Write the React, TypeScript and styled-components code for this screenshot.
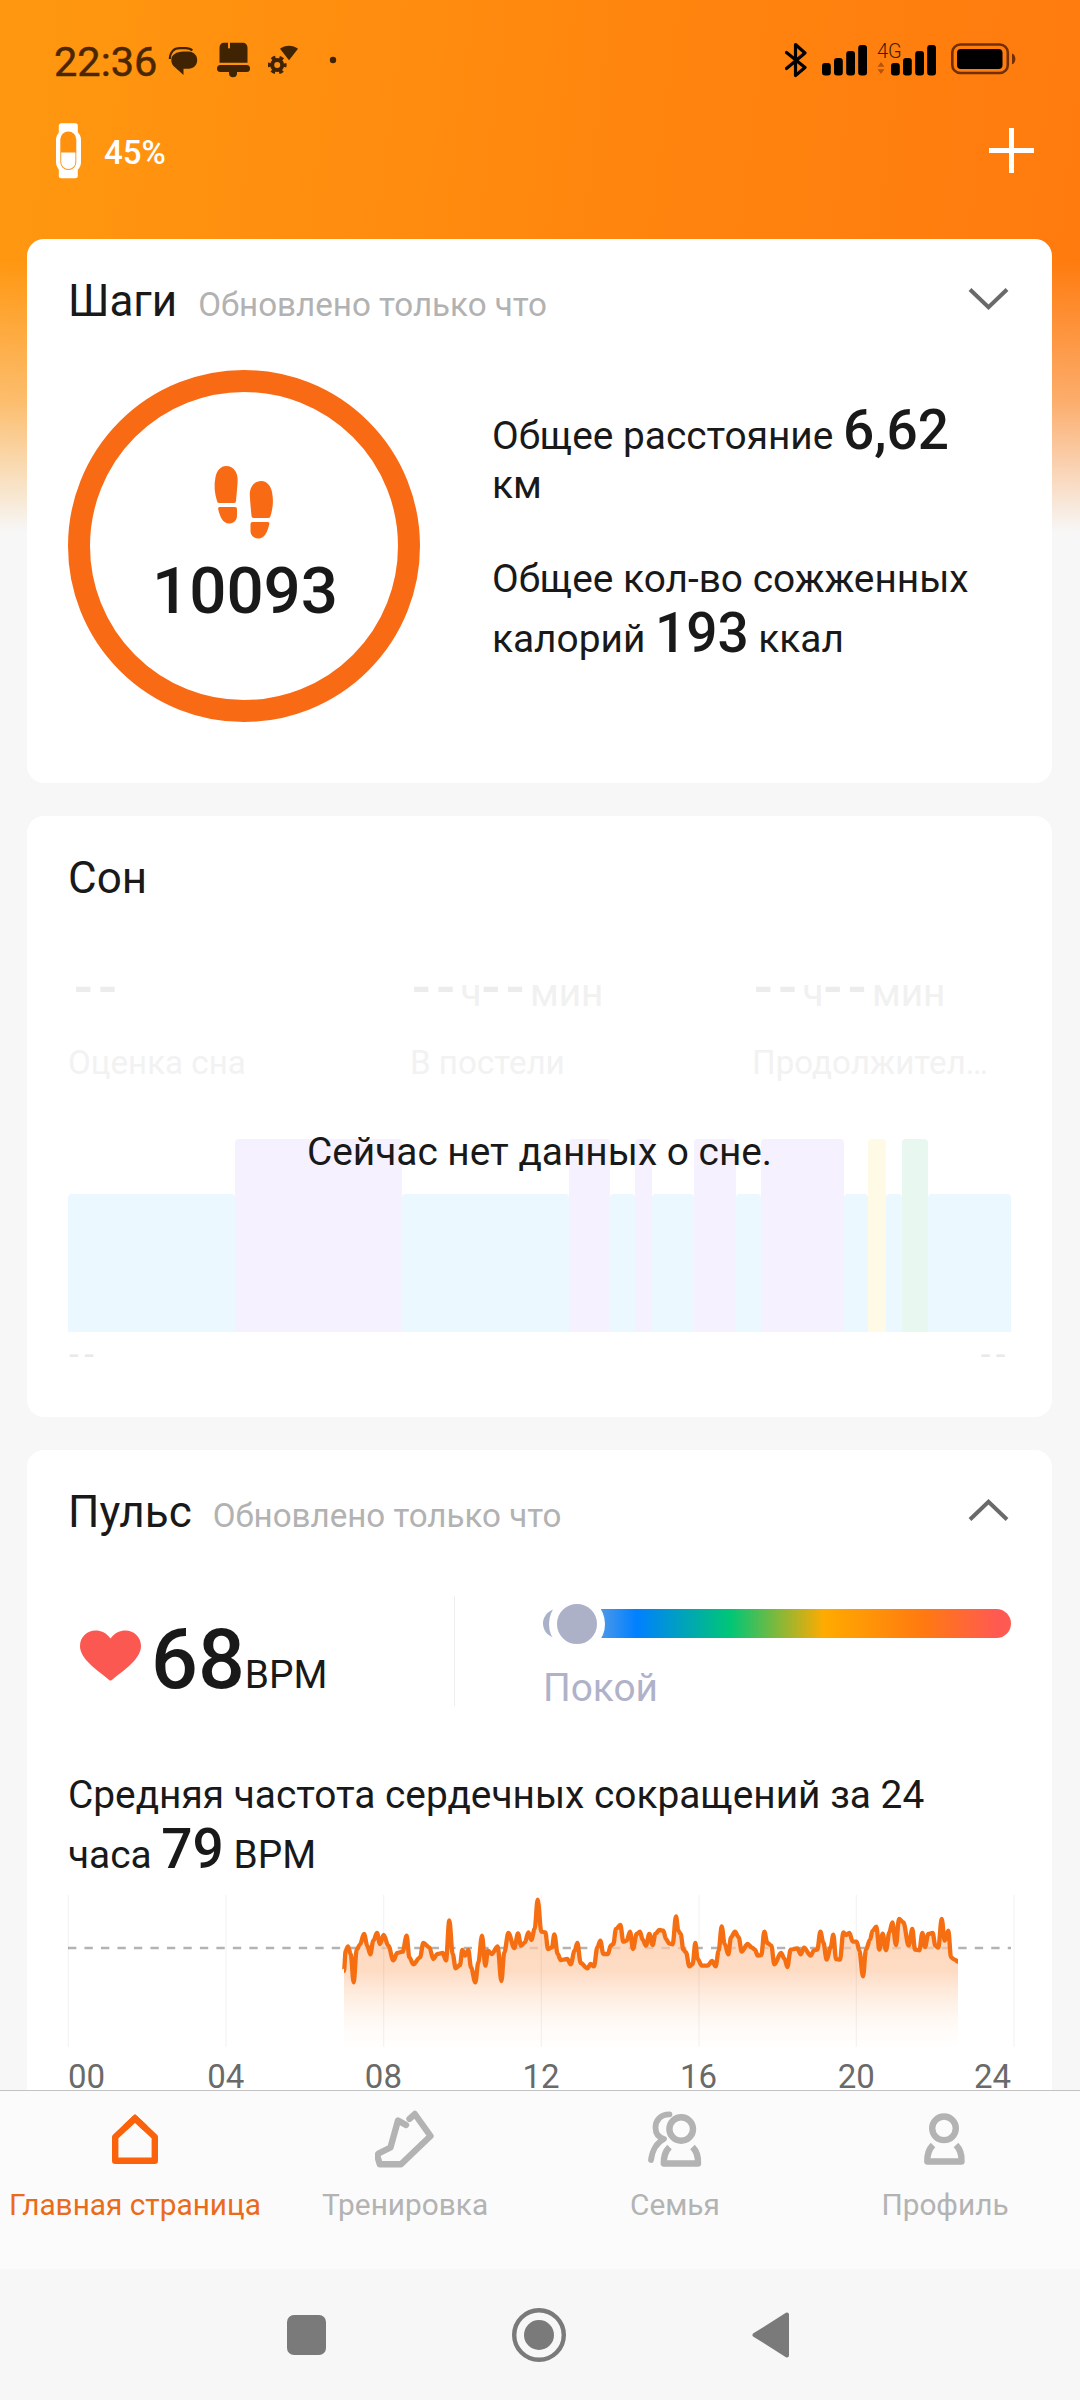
import React from "react";
import styled, { createGlobalStyle } from "styled-components";

const GlobalStyle = createGlobalStyle`
  * { box-sizing: border-box; }
  body {
    margin: 0;
    background: #f7f7f7;
    font-family: Roboto, "Noto Sans", sans-serif;
    color: #191919;
  }
  svg { display: block; flex: none; }
`;

const Page = styled.div`
  display: flex;
  flex-direction: column;
  width: 1080px;
  height: 2400px;
  overflow: hidden;
  background:
    linear-gradient(180deg, rgba(247, 247, 247, 0) 260px, rgba(247, 247, 247, 0.4) 400px, #f7f7f7 532px),
    linear-gradient(97deg, #ff9810 0%, #ff840e 50%, #ff750e 100%);
`;

/* ---------- status bar ---------- */

const StatusBar = styled.div`
  display: flex;
  align-items: center;
  flex: none;
  height: 120px;
  padding: 0 64px 0 54px;
`;

const Clock = styled.span`
  width: 114px;
  padding-top: 4px;
  font-size: 41.5px;
  line-height: 44px;
  color: #4a2703;
  -webkit-text-stroke: 0.5px #4a2703;
`;

const Notices = styled.div`
  display: flex;
  align-items: center;
`;

const NoticeSlot = styled.span<{ $gap: number }>`
  margin-left: ${(p) => p.$gap}px;
`;

const Indicators = styled.div`
  display: flex;
  align-items: center;
  margin-left: auto;
`;

const SignalSlot = styled.span<{ $gap: number; $width: number }>`
  position: relative;
  display: flex;
  justify-content: flex-end;
  width: ${(p) => p.$width}px;
  margin-left: ${(p) => p.$gap}px;
`;

const NetworkTag = styled.span`
  position: absolute;
  left: 0;
  top: 0;
  font-size: 20px;
  font-weight: 300;
  line-height: 18px;
  color: #3c1c02;
`;

const TrafficArrows = styled.svg`
  position: absolute;
  left: 0;
  top: 20px;
`;

/* ---------- device header ---------- */

const DeviceBar = styled.header`
  display: flex;
  align-items: center;
  flex: none;
  height: 61px;
  margin-bottom: 58px;
  padding: 0 46px 0 56px;
  color: #fff;
`;

const BatteryText = styled.span`
  flex: 1;
  margin-left: 23px;
  padding-top: 5px;
  font-size: 33px;
  font-weight: 500;
  line-height: 40px;
`;

/* ---------- cards ---------- */

const Feed = styled.main`
  display: flex;
  flex-direction: column;
  flex: 1;
  gap: 33px;
  min-height: 0;
  overflow: hidden;
  padding: 0 28px 0 27px;
`;

const Card = styled.section<{ $height: number }>`
  position: relative;
  flex: none;
  height: ${(p) => p.$height}px;
  padding: 32px 41px 0;
  border-radius: 17px;
  background: #fff;
`;

const CardHead = styled.div`
  display: flex;
  align-items: baseline;
  height: 60px;
`;

const Title = styled.h2`
  margin: 0;
  font-size: 44px;
  font-weight: 400;
  line-height: 60px;
`;

const Updated = styled.span`
  flex: 1;
  margin-left: 21px;
  font-size: 33.15px;
  color: #b2b2b2;
`;

const ChevronBox = styled.span`
  align-self: center;
  margin: 0 2px 5px 0;
`;

const Chevron = ({ up }: { up?: boolean }) => (
  <ChevronBox>
    <svg width="41" height="22" viewBox="0 0 41 22" fill="none" stroke="#6a6a6a" strokeWidth="4">
      <path d={up ? "M2 20.5 20.5 2.8 39 20.5" : "M2 1.5 20.5 19.2 39 1.5"} />
    </svg>
  </ChevronBox>
);

/* ---------- steps ---------- */

const StepsBody = styled.div`
  display: flex;
  align-items: flex-start;
  margin-top: 39px;
`;

const Ring = styled.div`
  display: flex;
  flex-direction: column;
  align-items: center;
  flex: none;
  width: 352px;
  height: 352px;
  padding-top: 73px;
  border: 22px solid #f96a15;
  border-radius: 50%;
`;

const StepCount = styled.span`
  margin-top: 17px;
  padding-left: 2px;
  font-size: 65.5px;
  font-weight: 500;
  line-height: 70px;
`;

const Facts = styled.div`
  display: flex;
  flex-direction: column;
  gap: 49px;
  width: 490px;
  margin: 28px 0 0 72px;
`;

const Text = styled.p`
  margin: 0;
  font-size: 38.85px;
  line-height: normal;
`;

const Strong = styled.span`
  font-size: 55px;
  font-weight: 500;
`;

/* ---------- sleep ---------- */

const SleepStats = styled.div`
  display: grid;
  grid-template-columns: 342px 342px 1fr;
  margin-top: 44px;
`;

const SleepValue = styled.div<{ $indent?: number }>`
  display: flex;
  align-items: baseline;
  height: 70px;
  padding-left: ${(p) => p.$indent ?? 2}px;
  font-size: 38.85px;
  line-height: 70px;
  color: #f1f1f1;
`;

const Dashes = styled.span`
  font-size: 55px;
  font-weight: 500;
  letter-spacing: 5.5px;
  color: #ececec;
`;

const SleepLabel = styled.div`
  height: 50px;
  margin-top: 16px;
  font-size: 33.15px;
  line-height: 50px;
  white-space: nowrap;
  color: #f2f2f2;
`;

const SleepChart = styled.div`
  display: flex;
  align-items: flex-end;
  height: 193px;
  margin-top: 51px;
`;

const stageColor = { light: "#ebf8ff", deep: "#f5f1ff", awake: "#fffae6", rem: "#e9f7f1" };
type Stage = keyof typeof stageColor;

const StageBar = styled.div<{ $stage: Stage; $span: number }>`
  flex: ${(p) => p.$span} 0 0;
  height: ${(p) => (p.$stage === "light" ? 138 : 193)}px;
  border-radius: 4px 4px 0 0;
  background: ${(p) => stageColor[p.$stage]};
`;

const SleepRange = styled.div`
  display: flex;
  justify-content: space-between;
  margin-top: 3px;
  padding: 0 0 0 1px;
  font-size: 35px;
  line-height: 40px;
  letter-spacing: 5.5px;
  color: #e9e9e9;
`;

const EmptyMessage = styled.div`
  position: absolute;
  left: 0;
  right: 0;
  top: 311px;
  text-align: center;
  font-size: 38.85px;
  line-height: 50px;
`;

const stages: [Stage, number][] = [
  ["light", 167], ["deep", 167], ["light", 167], ["deep", 41], ["light", 25],
  ["deep", 17], ["light", 42], ["deep", 42], ["light", 25], ["deep", 83],
  ["light", 24], ["awake", 18], ["light", 16], ["rem", 26], ["light", 83],
];

/* ---------- heart rate ---------- */

const PulseRow = styled.div`
  display: flex;
  align-items: flex-start;
  height: 114px;
  margin-top: 54px;
`;

const PulseNow = styled.div`
  display: flex;
  align-items: flex-start;
  width: 387px;
  height: 110px;
  padding-left: 12px;
  border-right: 1px solid #eee;
`;

const HeartBox = styled.span`
  margin-top: 34px;
`;

const PulseValue = styled.div`
  margin: 14px 0 0 10px;
  font-size: 38.85px;
  line-height: 100px;
  white-space: nowrap;
`;

const BigNumber = styled.span`
  font-size: 82.5px;
  font-weight: 500;
`;

const Zone = styled.div`
  flex: 1;
  margin-left: 88px;
  padding-top: 13px;
`;

const ZoneTrack = styled.div`
  display: flex;
  align-items: center;
  height: 29px;
  padding-left: 6px;
  border-radius: 14.5px;
  background: linear-gradient(
    90deg,
    #adb1c8 0%, #9db2cf 4%, #0080ff 20%, #00c677 40%, #ffab00 60%, #ff7a10 81%, #ff5a52 97%
  );
`;

const ZoneKnob = styled.span`
  flex: none;
  width: 56px;
  height: 56px;
  border: 8px solid #fff;
  border-radius: 50%;
  background: #adb1c8;
`;

const ZoneLabel = styled.div`
  margin-top: 25px;
  font-size: 38.85px;
  line-height: 50px;
  color: #b0b2c9;
`;

const Average = styled(Text)`
  margin-top: 62px;
  padding-right: 40px;
`;

const ChartBox = styled.div`
  margin-top: 14px;
  width: 947px;
`;

const Hours = styled.div`
  display: grid;
  grid-template-columns: 79px repeat(5, 157.6px) 76px;
  margin-top: 13px;
  font-size: 33px;
  line-height: 33px;
  color: #6a6a6a;
`;

const Hour = styled.span<{ $align: string }>`
  text-align: ${(p) => p.$align};
`;

const pulse: [number, number][] = [
  [828, 228], [833, 167], [840, 154], [848, 177], [857, 262], [866, 164], [876, 149], [888, 117],
  [898, 152], [907, 178], [916, 137], [927, 114], [936, 147], [947, 120], [961, 152], [976, 196],
  [988, 174], [1004, 170], [1016, 122], [1024, 187], [1036, 208], [1056, 187], [1066, 144], [1084, 157],
  [1096, 192], [1108, 177], [1124, 174], [1134, 196], [1144, 76], [1154, 177], [1163, 220], [1176, 210],
  [1183, 165], [1191, 182], [1201, 165], [1209, 217], [1222, 262], [1231, 202], [1242, 122], [1252, 212],
  [1260, 167], [1271, 177], [1289, 154], [1300, 258], [1309, 172], [1321, 114], [1339, 159], [1350, 115],
  [1359, 152], [1371, 142], [1381, 112], [1390, 135], [1400, 102], [1409, 14], [1420, 110], [1432, 112],
  [1440, 162], [1452, 157], [1459, 118], [1469, 177], [1478, 195], [1498, 192], [1508, 208], [1520, 167],
  [1528, 144], [1538, 204], [1558, 220], [1568, 207], [1578, 214], [1588, 157], [1597, 137], [1606, 177],
  [1620, 177], [1628, 152], [1636, 147], [1644, 102], [1657, 90], [1666, 140], [1676, 137], [1686, 110],
  [1695, 162], [1706, 117], [1716, 110], [1724, 134], [1734, 152], [1744, 117], [1754, 150], [1762, 117],
  [1774, 105], [1786, 107], [1794, 132], [1804, 146], [1814, 148], [1824, 64], [1831, 107], [1838, 117],
  [1846, 164], [1854, 172], [1864, 214], [1874, 207], [1882, 144], [1889, 192], [1901, 212], [1919, 212],
  [1932, 198], [1943, 214], [1952, 167], [1961, 94], [1970, 147], [1981, 178], [1989, 127], [2001, 110],
  [2012, 127], [2021, 170], [2039, 147], [2051, 157], [2061, 164], [2069, 182], [2080, 180], [2089, 110],
  [2098, 144], [2110, 152], [2119, 208], [2139, 174], [2150, 192], [2158, 216], [2168, 164], [2188, 160],
  [2198, 178], [2208, 158], [2228, 182], [2238, 166], [2248, 164], [2257, 110], [2266, 142], [2276, 194],
  [2288, 157], [2296, 119], [2304, 192], [2316, 194], [2326, 112], [2334, 120], [2344, 114], [2354, 140],
  [2366, 140], [2374, 167], [2385, 244], [2394, 164], [2406, 134], [2414, 107], [2425, 95], [2434, 164],
  [2444, 116], [2454, 166], [2464, 112], [2473, 82], [2484, 150], [2493, 72], [2506, 82], [2522, 152],
  [2533, 102], [2541, 164], [2554, 166], [2563, 114], [2571, 156], [2581, 117], [2594, 114], [2602, 152],
  [2611, 158], [2621, 72], [2630, 137], [2641, 107], [2649, 187], [2660, 194], [2670, 200],
];

/* Smooths the series with horizontal tangents between neighbouring samples. */
const smooth = (pts: [number, number][]) =>
  pts
    .map(([x, y], i) => {
      if (i === 0) return `M${x} ${y}`;
      const [px, py] = pts[i - 1];
      const k = (x - px) * 0.35;
      return `C${px + k} ${py} ${x - k} ${y} ${x} ${y}`;
    })
    .join("");

const PulseChart = () => {
  const line = smooth(pulse);
  return (
    <svg width="947" height="152" viewBox="0 0 2841 456" overflow="visible">
      <defs>
        <linearGradient id="pulseFill" x1="0" y1="0" x2="0" y2="456" gradientUnits="userSpaceOnUse">
          <stop offset="0.1" stopColor="#fdc6a0" stopOpacity="0.75" />
          <stop offset="0.5" stopColor="#fdcba8" stopOpacity="0.68" />
          <stop offset="1" stopColor="#fff4ea" stopOpacity="0.05" />
        </linearGradient>
      </defs>
      <path d="M0 159H2829" stroke="#b3b3b3" strokeWidth="7.5" strokeDasharray="25 24.46" />
      <path d={`${line}V456H828Z`} fill="url(#pulseFill)" />
      {[1, 474, 947, 1420, 1893, 2365, 2838].map((x) => (
        <path key={x} d={`M${x} 0V456`} stroke="#000" strokeOpacity="0.045" strokeWidth="4" />
      ))}
      <path d={line} fill="none" stroke="#f56f12" strokeWidth="13" strokeLinejoin="round" />
    </svg>
  );
};

/* ---------- bottom navigation ---------- */

const TabBar = styled.nav`
  display: grid;
  grid-template-columns: repeat(4, 270px);
  flex: none;
  height: 179px;
  border-top: 1px solid #c3c3c3;
  background: #fbfbfb;
`;

const Tab = styled.a<{ $active?: boolean }>`
  display: flex;
  flex-direction: column;
  align-items: center;
  padding-top: 18px;
  font-size: 29.8px;
  line-height: 40px;
  white-space: nowrap;
  color: ${(p) => (p.$active ? "#ea6c1a" : "#b3b3b3")};
`;

const TabLabel = styled.span`
  margin-top: 16px;
`;

const TabIcon = ({ children }: { children: React.ReactNode }) => (
  <svg
    width="60" height="60" viewBox="0 0 60 60" fill="none"
    stroke="currentColor" strokeWidth="6.4" strokeLinejoin="round"
  >
    {children}
  </svg>
);

const SystemBar = styled.div`
  display: flex;
  align-items: center;
  flex: none;
  gap: 186px;
  height: 131px;
  padding: 1px 0 0 287px;
  background: #f7f7f7;
`;

const RecentsKey = styled.span`
  width: 39px;
  height: 40px;
  border-radius: 7px;
  background: #7a7a7a;
`;

const SignalBars = () => (
  <svg width="45" height="36" viewBox="0 0 45 36">
    <rect x="0" y="21" width="8.8" height="12.5" rx="3" />
    <rect x="12" y="16" width="8.8" height="17.5" rx="3" />
    <rect x="24.2" y="9" width="8.8" height="24.5" rx="3" />
    <rect x="36.200" y="3" width="8.8" height="30.5" rx="3" />
  </svg>
);

const dark = "#402302";

export default function App() {
  return (
    <Page>
      <GlobalStyle />
      <StatusBar>
        <Clock>22:36</Clock>
        <Notices>
          <NoticeSlot $gap={0}>
            <svg width="30" height="36" viewBox="0 0 30 36">
              <path
                d="M15.5 9.5h5c5 0 8.7 3.600 8.700 8.500 0 5-3.400 8.700-8.700 8.700l-5 0 0 6.300-8.300-7.600C4.600 23.500 3.300 21.300 3.300 18c0-5 5-8.500 12.200-8.500z"
                fill={dark}
              />
              <path d="M1.800 17C2 10.500 5.500 6.200 12 6.200h5.500c3.200 0 5.300.8 6.800 2.400" fill="none" stroke={dark} strokeWidth="2.200" />
            </svg>
          </NoticeSlot>
          <NoticeSlot $gap={19}>
            <svg width="34" height="36" viewBox="0 0 34 36" fill={dark}>
              <path d="M7 .8h4V5.500c0 1.300 2 1.300 2 0V.8H25.500c3 0 5 2 5 5V20.800H2.500V5.800c0-3 1.500-5 4.500-5z" />
              <rect x="0" y="23" width="33" height="7" rx="3.500" />
              <path d="M12 29h8v2.200a4 4 0 0 1-8 0z" />
            </svg>
          </NoticeSlot>
          <NoticeSlot $gap={17}>
            <svg width="31" height="36" viewBox="0 0 31 36" fill="none">
              <path d="M12 6.800C17 2.800 25 2.800 30 6.800L21 18.200z" fill={dark} />
              <circle cx="9.200" cy="23" r="5" stroke={dark} strokeWidth="4" />
              <circle cx="9.200" cy="23" r="7.800" stroke={dark} strokeWidth="3.200" strokeDasharray="4.080 4.080" strokeDashoffset="2" />
            </svg>
          </NoticeSlot>
          <NoticeSlot $gap={30}>
            <svg width="8" height="8" viewBox="0 0 8 8">
              <circle cx="4" cy="4" r="3.200" fill={dark} />
            </svg>
          </NoticeSlot>
        </Notices>
        <Indicators>
          <svg width="22" height="36" viewBox="0 0 22 36" fill="none" stroke="#000" strokeWidth="3.200" strokeLinecap="round" strokeLinejoin="round">
            <path d="M1.500 10.500 20 25.500 10.500 33.500V2.500L20 11 1.500 26.500" />
          </svg>
          <SignalSlot $gap={15} $width={45}>
            <SignalBars />
          </SignalSlot>
          <SignalSlot $gap={10} $width={59}>
            <NetworkTag>4G</NetworkTag>
            <TrafficArrows width="8" height="12" viewBox="0 0 8 12" fill="#b75308">
              <path d="M4 0 7.500 4.800H.5zM4 12 .5 7.200h7z" />
            </TrafficArrows>
            <SignalBars />
          </SignalSlot>
          <SignalSlot $gap={15} $width={65}>
            <svg width="65" height="36" viewBox="0 0 65 36">
              <rect x="1.300" y="2.500" width="55.500" height="28.500" rx="8" fill="none" stroke="#722f03" strokeWidth="2.600" />
              <rect x="6" y="7" width="45.500" height="20" rx="4" />
              <path d="M61 11.500c4.500 1.200 4.500 9.600 0 10.800z" fill="#722f03" />
            </svg>
          </SignalSlot>
        </Indicators>
      </StatusBar>

      <DeviceBar>
        <svg width="25" height="56" viewBox="0 0 25 56">
          <rect x="2.800" y="0.300" width="19" height="55" rx="2.500" fill="#fff" />
          <rect x="0" y="6" width="25" height="44" rx="11" fill="#fff" />
          <rect x="4.300" y="8.500" width="16" height="38.500" rx="8" fill="#ff910e" />
          <path d="M5.200 29.500h14.200v9.500a7.100 7 0 0 1-14.200 0z" fill="#fff" />
        </svg>
        <BatteryText>45%</BatteryText>
        <svg width="45" height="45" viewBox="0 0 45 45" stroke="#fff" strokeWidth="5">
          <path d="M0 22.500H45M22.500 0V45" />
        </svg>
      </DeviceBar>

      <Feed>
        <Card $height={544}>
          <CardHead>
            <Title>Шаги</Title>
            <Updated>Обновлено только что</Updated>
            <Chevron />
          </CardHead>
          <StepsBody>
            <Ring>
              <svg width="62" height="74" viewBox="0 0 62 74" fill="#f96a15">
                <g id="foot">
                  <path d="M4 36C1.500 28 .8 20 2.500 12 4 5 8 1 13 1c8 0 12.500 7 11.600 16-.4 7-1.100 13-1.600 19q0 2-2 2H6Q4.300 38 4 36z" />
                  <path d="M7 42H22q2 0 2 2v7c-.2 5-4 7.500-8 7.500C10 58.500 7 52 5.300 44.500 4.800 43 5.500 42 7 42z" />
                </g>
                <use href="#foot" transform="translate(61.500 15) scale(-1 1)" />
              </svg>
              <StepCount>10093</StepCount>
            </Ring>
            <Facts>
              <Text>
                Общее расстояние <Strong>6,62</Strong> км
              </Text>
              <Text>
                Общее кол-во сожженных калорий <Strong>193</Strong> ккал
              </Text>
            </Facts>
          </StepsBody>
        </Card>

        <Card $height={601}>
          <CardHead>
            <Title>Сон</Title>
          </CardHead>
          <SleepStats>
            <div>
              <SleepValue $indent={6}><Dashes>--</Dashes></SleepValue>
              <SleepLabel>Оценка сна</SleepLabel>
            </div>
            <div>
              <SleepValue><Dashes>--</Dashes>ч<Dashes>--</Dashes>мин</SleepValue>
              <SleepLabel>В постели</SleepLabel>
            </div>
            <div>
              <SleepValue><Dashes>--</Dashes>ч<Dashes>--</Dashes>мин</SleepValue>
              <SleepLabel>Продолжител…</SleepLabel>
            </div>
          </SleepStats>
          <SleepChart>
            {stages.map(([stage, span], i) => (
              <StageBar key={i} $stage={stage} $span={span} />
            ))}
          </SleepChart>
          <SleepRange>
            <span>--</span>
            <span>--</span>
          </SleepRange>
          <EmptyMessage>Сейчас нет данных о сне.</EmptyMessage>
        </Card>

        <Card $height={680}>
          <CardHead>
            <Title>Пульс</Title>
            <Updated>Обновлено только что</Updated>
            <Chevron up />
          </CardHead>
          <PulseRow>
            <PulseNow>
              <HeartBox>
                <svg width="61" height="51" viewBox="0 0 61 51" fill="#fa5850">
                  <path d="M30.500 8.500C26 2.500 21 .5 15.500.5 7 .5 0 7 0 16 0 22 3.500 27 7 31c6.500 7.200 15 13 22.500 19.200q1 .8 2 0C39 44 47.500 38.200 54 31c3.500-4 7-9 7-15C61 7 54 .5 45.500.5 40 .5 35 2.500 30.500 8.500z" />
                </svg>
              </HeartBox>
              <PulseValue>
                <BigNumber>68</BigNumber>BPM
              </PulseValue>
            </PulseNow>
            <Zone>
              <ZoneTrack>
                <ZoneKnob />
              </ZoneTrack>
              <ZoneLabel>Покой</ZoneLabel>
            </Zone>
          </PulseRow>
          <Average>
            Средняя частота сердечных сокращений за 24 часа <Strong>79</Strong> BPM
          </Average>
          <ChartBox>
            <PulseChart />
          </ChartBox>
          <Hours>
            {["00", "04", "08", "12", "16", "20", "24"].map((h, i) => (
              <Hour key={h} $align={i === 0 ? "left" : i === 6 ? "right" : "center"}>
                {h}
              </Hour>
            ))}
          </Hours>
        </Card>
      </Feed>

      <TabBar>
        <Tab $active>
          <TabIcon>
            <path d="M30 9.300 10.200 28V51.800H49.800V28Z" stroke="#fb620c" strokeLinejoin="round" />
            <path d="M20 18.800 30 9.300 40 18.800" stroke="#fb620c" strokeLinejoin="miter" />
          </TabIcon>
          <TabLabel>Главная страница</TabLabel>
        </Tab>
        <Tab>
          <TabIcon>
            <path d="M31 16 23 11.500 15.500 38.500 4.500 44Q2 45.500 2.600 48L4.800 55.300H26L55.500 27 39.800 5 34.500 9.800" strokeLinecap="round" />
          </TabIcon>
          <TabLabel>Тренировка</TabLabel>
        </Tab>
        <Tab>
          <TabIcon>
            <circle cx="36.200" cy="20" r="11.800" />
            <path d="M24.500 38Q18.500 44 18.800 54.500H53Q53.500 44 47.500 38" />
            <path d="M24.500 5.300C15 5.300 10.500 12 10.500 18.500 10.500 25 14 28.500 19 30 12 33.500 7.500 40 6 51" strokeLinecap="round" strokeWidth="5.800" />
          </TabIcon>
          <TabLabel>Семья</TabLabel>
        </Tab>
        <Tab>
          <TabIcon>
            <circle cx="29" cy="19.300" r="11.800" />
            <path d="M18 36Q12 42 12.300 52.500H46.500Q47 42 41 36" />
          </TabIcon>
          <TabLabel>Профиль</TabLabel>
        </Tab>
      </TabBar>

      <SystemBar>
        <RecentsKey />
        <svg width="54" height="54" viewBox="0 0 54 54">
          <circle cx="27" cy="27" r="24.800" fill="none" stroke="#7a7a7a" strokeWidth="4.400" />
          <circle cx="27" cy="27" r="15" fill="#7a7a7a" />
        </svg>
        <svg width="38" height="46" viewBox="0 0 38 46" fill="#7a7a7a" stroke="#7a7a7a" strokeWidth="4" strokeLinejoin="round">
          <path d="M2.500 23 35 2.500V43.500Z" />
        </svg>
      </SystemBar>
    </Page>
  );
}
